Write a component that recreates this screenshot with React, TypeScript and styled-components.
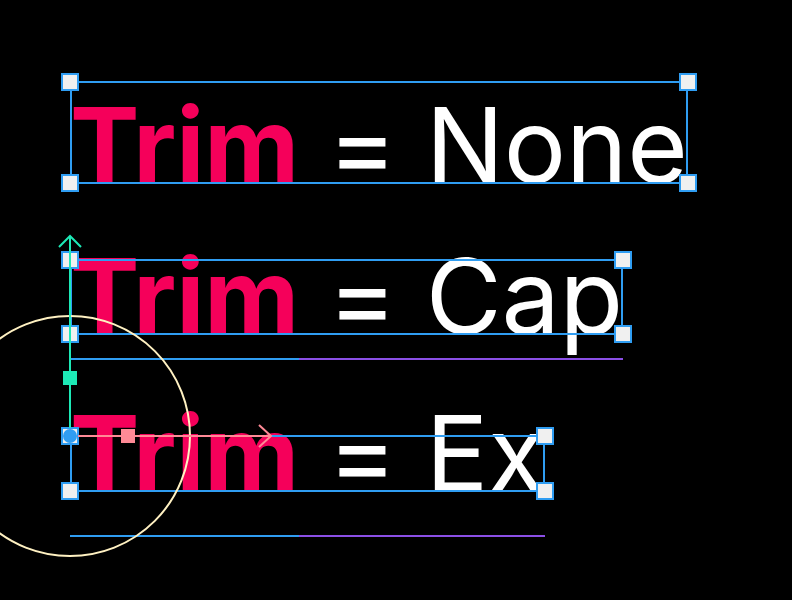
import styled, { createGlobalStyle } from 'styled-components';

// Trim demo: three text lines with their trim boxes, handles and guides

const GlobalStyle = createGlobalStyle`
  html, body {
    margin: 0;
    padding: 0;
    background: #000;
  }
`;

const BLUE = '#2f9df2';
const PURPLE = '#8b4fe6';
const PINK = '#f5005a';
const GREEN = '#1de9b6';
const SALMON = '#ff8a96';
const CREAM = '#fff1c2';

const Canvas = styled.div`
  position: relative;
  width: 792px;
  height: 600px;
  overflow: hidden;
  background: #000;
  padding: 82px 0 0 70px;
  box-sizing: border-box;
  display: flex;
  flex-direction: column;
  align-items: flex-start;
  font-family: Inter, 'Noto Sans', sans-serif;
`;

const Row = styled.div<{ $gap: number }>`
  display: flex;
  height: 126px;
  margin-top: ${({ $gap }) => $gap}px;
  font-size: 104px;
  line-height: 126px;
  letter-spacing: -0.2px;
  white-space: nowrap;
`;

const Text = styled.span`
  position: relative;
  display: inline-block;
`;

const Frame = styled.span<{ $top: number; $base: number }>`
  position: absolute;
  left: 0;
  right: 0;
  top: ${({ $top }) => $top}px;
  height: ${({ $top, $base }) => $base - $top}px;
  border: 2px solid ${BLUE};
  box-sizing: border-box;
  margin-top: -1px;
  margin-bottom: -1px;
  height: ${({ $top, $base }) => $base - $top + 2}px;
`;

const Word = styled.span<{ $under: number; $kind: 'trim' | 'rest' }>`
  position: relative;
  color: ${({ $kind }) => ($kind === 'trim' ? PINK : '#fff')};
  font-weight: ${({ $kind }) => ($kind === 'trim' ? 700 : 400)};

  &::after {
    content: '';
    position: absolute;
    left: 0;
    right: 0;
    top: ${({ $under }) => $under - 1}px;
    height: 2px;
    background: ${({ $kind }) => ($kind === 'trim' ? BLUE : PURPLE)};
  }
`;

const Handle = styled.span<{ $x: 'l' | 'r'; $y: number }>`
  position: absolute;
  z-index: 1;
  ${({ $x }) => ($x === 'l' ? 'left: 0;' : 'left: 100%;')}
  top: ${({ $y }) => $y}px;
  width: 18px;
  height: 18px;
  transform: translate(-50%, -50%);
  background: #f0f0f0;
  border: 2px solid ${BLUE};
  box-sizing: border-box;
`;

const Guides = styled.svg`
  position: absolute;
  left: 0;
  top: 0;
  z-index: 2;
  pointer-events: none;
`;

const lines = [
  { gap: 0, rest: '\u00a0= None', frameTop: 0, base: 101, under: 101 },
  { gap: 25, rest: '\u00a0= Cap', frameTop: 27, base: 101, under: 126 },
  { gap: 31, rest: '\u00a0= Ex', frameTop: 46, base: 101, under: 146 },
];

export default function App() {
  return (
    <>
      <GlobalStyle />
      <Canvas>
        {lines.map((l, i) => (
          <Row key={i} $gap={l.gap}>
            <Text>
              <Word $kind="trim" $under={l.under}>Trim</Word>
              <Word $kind="rest" $under={l.under}>{l.rest}</Word>
              <Frame $top={l.frameTop} $base={l.base} />
              <Handle $x="l" $y={l.frameTop} />
              <Handle $x="r" $y={l.frameTop} />
              <Handle $x="l" $y={l.base} />
              <Handle $x="r" $y={l.base} />
            </Text>
          </Row>
        ))}

        <Guides width="792" height="600" viewBox="0 0 792 600">
          <circle cx="70" cy="436" r="120" fill="none" stroke={CREAM} strokeWidth="2" />
          <line x1="70" y1="237" x2="70" y2="428" stroke={GREEN} strokeWidth="2" />
          <polyline points="59,247 70,236 81,247" fill="none" stroke={GREEN} strokeWidth="2" />
          <rect x="63" y="371" width="14" height="14" fill={GREEN} />
          <line x1="78" y1="436" x2="271" y2="436" stroke={SALMON} strokeWidth="2" />
          <polyline points="259,425 271,436 259,447" fill="none" stroke={SALMON} strokeWidth="2" />
          <rect x="121" y="429" width="14" height="14" fill={SALMON} />
          <circle cx="70" cy="436" r="7" fill={BLUE} />
        </Guides>
      </Canvas>
    </>
  );
}
